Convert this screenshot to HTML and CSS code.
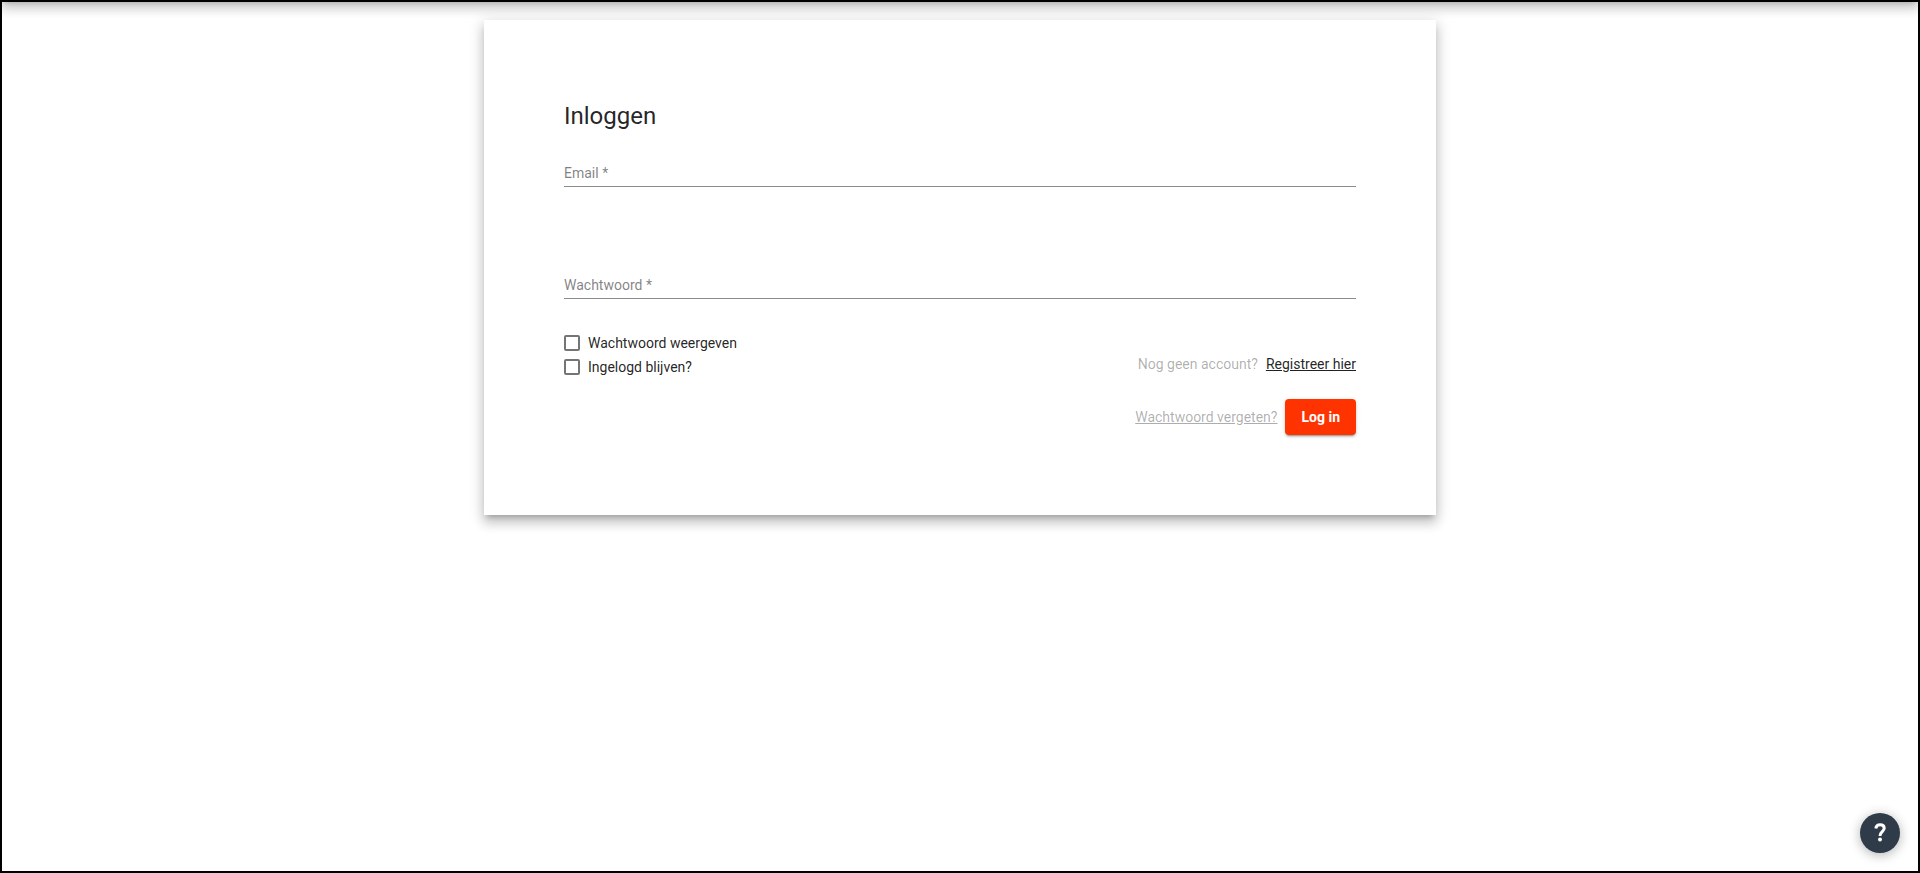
FILE: index.html
```html
<!DOCTYPE html>
<html lang="nl">

<head>
    <meta charset="UTF-8">
    <meta name="viewport" content="width=device-width, initial-scale=1.0">
    <title>Inloggen</title>
    <link rel="stylesheet" href="styles.css">
</head>

<body>
    <div class="page">
        <header class="toolbar"></header>

        <main class="card">
            <h1>Inloggen</h1>
            <form class="login-form">
                <div class="field">
                    <label for="email">Email *</label>
                    <input type="email" id="email" name="email" required>
                </div>
                <div class="field">
                    <label for="password">Wachtwoord *</label>
                    <input type="password" id="password" name="password" required>
                </div>

                <div class="options">
                    <div class="checks">
                        <label class="check" for="show-password">
                            <input type="checkbox" id="show-password">
                            <span>Wachtwoord weergeven</span>
                        </label>
                        <label class="check" for="remember">
                            <input type="checkbox" id="remember" name="remember">
                            <span>Ingelogd blijven?</span>
                        </label>
                    </div>
                    <p class="register">
                        <span>Nog geen account?</span>
                        <a href="#register">Registreer hier</a>
                    </p>
                </div>

                <div class="actions">
                    <a href="#forgot" class="forgot">Wachtwoord vergeten?</a>
                    <button type="submit" class="submit">Log in</button>
                </div>
            </form>
        </main>

        <button type="button" class="help" aria-label="Help">
            <svg width="40" height="40" viewBox="0 0 40 40" fill="none">
                <path d="M15.8 15.4C16.2 12.9 18 11.8 20.1 11.8C22.5 11.8 24.2 13.2 24.2 15.3C24.2 18.6 20 18.8 20 22.9" stroke="#fff" stroke-width="3" />
                <circle cx="20" cy="26.6" r="2" fill="#fff" />
            </svg>
        </button>
    </div>

    <script>
        // Toggle the password between hidden and readable
        document.getElementById('show-password').addEventListener('change', (e) => {
            document.getElementById('password').type = e.target.checked ? 'text' : 'password';
        });
    </script>
</body>

</html>
```
FILE: styles.css
```css
* {
    box-sizing: border-box;
}

body {
    margin: 0;
    font-family: Roboto, "Open Sans", sans-serif;
    font-size: 14px;
    line-height: 20px;
    color: rgba(0, 0, 0, 0.87);
    background-color: #ffffff;
}

.page {
    min-height: 100vh;
    padding-bottom: 20px;
    border: 2px solid #000000;
    overflow: hidden;
}

/* Toolbar is slid out of view, only its shadow shows */
.toolbar {
    height: 64px;
    margin-top: -66px;
    box-shadow: 0 5px 5px -3px rgba(0, 0, 0, 0.2), 0 8px 10px 1px rgba(0, 0, 0, 0.14), 0 3px 14px 2px rgba(0, 0, 0, 0.12);
}

.card {
    width: calc(50% - 6px);
    min-width: 560px;
    margin: 20px auto 0;
    padding: 80px;
    background-color: #ffffff;
    box-shadow: 0 5px 5px -3px rgba(0, 0, 0, 0.2), 0 8px 10px 1px rgba(0, 0, 0, 0.14), 0 3px 14px 2px rgba(0, 0, 0, 0.12);
}

h1 {
    margin: 0 0 31px;
    font-size: 24px;
    font-weight: 400;
    line-height: 32px;
}

/* Label and input share one cell, the label sits inside the input */
.field {
    display: grid;
    margin-bottom: 88px;
}

.field label,
.field input {
    grid-area: 1 / 1;
}

.field label {
    color: rgba(0, 0, 0, 0.5);
    pointer-events: none;
}

.field input {
    width: 100%;
    height: 24px;
    padding: 0;
    border: none;
    border-bottom: 1px solid rgba(0, 0, 0, 0.45);
    border-radius: 0;
    background: none;
    font: inherit;
    outline: none;
}

.field + .field {
    margin-bottom: 32px;
}

.options {
    display: flex;
    justify-content: space-between;
    align-items: flex-end;
    margin-bottom: 20px;
}

.check {
    display: flex;
    align-items: center;
    gap: 8px;
    height: 24px;
    cursor: pointer;
}

.check input {
    appearance: none;
    width: 16px;
    height: 16px;
    margin: 0;
    border: 2px solid rgba(0, 0, 0, 0.54);
    border-radius: 2px;
}

.check input:checked {
    border-color: #ff3300;
    background-color: #ff3300;
}

.register {
    display: flex;
    gap: 8px;
    margin: 0 0 5px;
    color: rgba(0, 0, 0, 0.32);
}

.register a {
    color: rgba(0, 0, 0, 0.87);
}

.actions {
    display: flex;
    justify-content: flex-end;
    align-items: center;
    gap: 8px;
}

.forgot {
    color: rgba(0, 0, 0, 0.32);
}

.submit {
    height: 36px;
    padding: 0 16px;
    border: none;
    border-radius: 4px;
    background-color: #ff3300;
    color: #ffffff;
    font: inherit;
    font-weight: 700;
    cursor: pointer;
    box-shadow: 0 3px 1px -2px rgba(0, 0, 0, 0.2), 0 2px 2px 0 rgba(0, 0, 0, 0.14), 0 1px 5px 0 rgba(0, 0, 0, 0.12);
}

.help {
    position: fixed;
    right: 20px;
    bottom: 20px;
    width: 40px;
    height: 40px;
    padding: 0;
    border: none;
    border-radius: 50%;
    background-color: #2f3b48;
    cursor: pointer;
    box-shadow: 0 2px 12px rgba(0, 0, 0, 0.3);
}

.help svg {
    display: block;
}
```
